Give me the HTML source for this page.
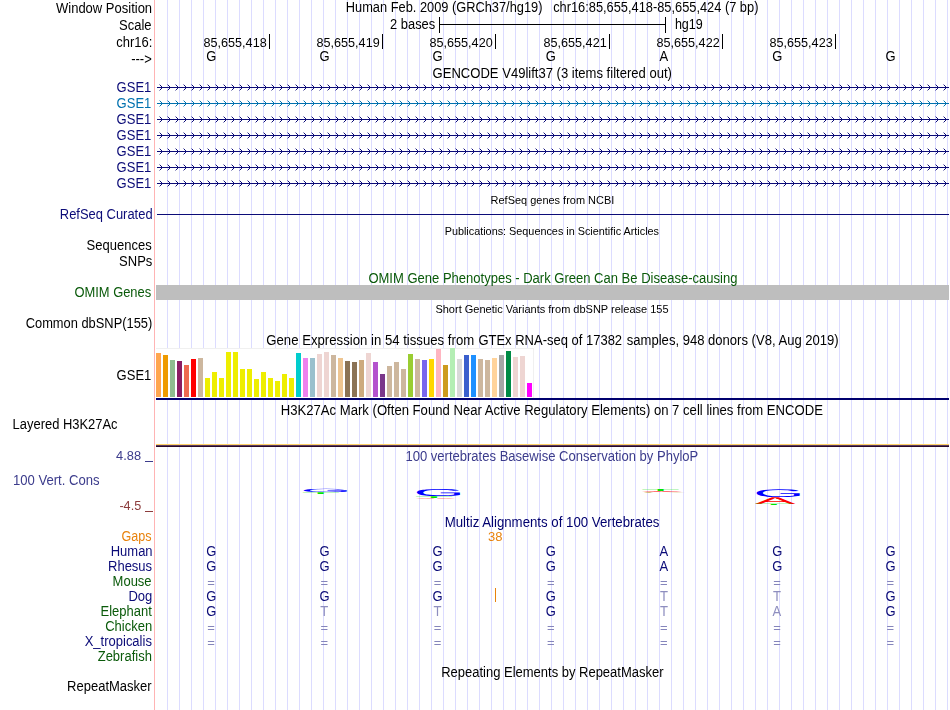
<!DOCTYPE html>
<html><head><meta charset="utf-8"><title>UCSC Genome Browser</title>
<style>
html,body{margin:0;padding:0;background:#fff;}
body{width:950px;height:710px;overflow:hidden;position:relative;font-family:"Liberation Sans", sans-serif;font-size:13px;color:#000;}
.t{position:absolute;white-space:pre;line-height:16px;height:16px;}
.b{position:absolute;}
#tx{will-change:opacity;}
text{white-space:pre;}
.ch{position:absolute;left:157px;width:792px;height:7px;background:linear-gradient(var(--c),var(--c)) 0 3px/100% 1px no-repeat,linear-gradient(90deg,var(--l) 1px,transparent 1px) 2px 0/8px 1px repeat-x,linear-gradient(90deg,var(--c) 1px,transparent 1px) 3px 1px/8px 1px repeat-x,linear-gradient(90deg,var(--c) 1px,transparent 1px) 4px 2px/8px 1px repeat-x,linear-gradient(90deg,var(--c) 1px,transparent 1px) 4px 4px/8px 1px repeat-x,linear-gradient(90deg,var(--c) 1px,transparent 1px) 3px 5px/8px 1px repeat-x,linear-gradient(90deg,var(--l) 1px,transparent 1px) 2px 6px/8px 1px repeat-x;}
svg{position:absolute;left:0;top:0;}
</style></head><body>
<svg width="950" height="710" viewBox="0 0 950 710" shape-rendering="crispEdges">
<rect x="154" y="0" width="1" height="710" fill="#ffb4b4"/>
<path d="M167 0h1v710h-1zM179 0h1v710h-1zM191 0h1v710h-1zM203 0h1v710h-1zM215 0h1v710h-1zM227 0h1v710h-1zM239 0h1v710h-1zM251 0h1v710h-1zM263 0h1v710h-1zM275 0h1v710h-1zM287 0h1v710h-1zM299 0h1v710h-1zM311 0h1v710h-1zM323 0h1v710h-1zM335 0h1v710h-1zM347 0h1v710h-1zM359 0h1v710h-1zM371 0h1v710h-1zM383 0h1v710h-1zM395 0h1v710h-1zM407 0h1v710h-1zM419 0h1v710h-1zM431 0h1v710h-1zM443 0h1v710h-1zM455 0h1v710h-1zM467 0h1v710h-1zM479 0h1v710h-1zM491 0h1v710h-1zM503 0h1v710h-1zM515 0h1v710h-1zM527 0h1v710h-1zM539 0h1v710h-1zM551 0h1v710h-1zM563 0h1v710h-1zM575 0h1v710h-1zM587 0h1v710h-1zM599 0h1v710h-1zM611 0h1v710h-1zM623 0h1v710h-1zM635 0h1v710h-1zM647 0h1v710h-1zM659 0h1v710h-1zM671 0h1v710h-1zM683 0h1v710h-1zM695 0h1v710h-1zM707 0h1v710h-1zM719 0h1v710h-1zM731 0h1v710h-1zM743 0h1v710h-1zM755 0h1v710h-1zM767 0h1v710h-1zM779 0h1v710h-1zM791 0h1v710h-1zM803 0h1v710h-1zM815 0h1v710h-1zM827 0h1v710h-1zM839 0h1v710h-1zM851 0h1v710h-1zM863 0h1v710h-1zM875 0h1v710h-1zM887 0h1v710h-1zM899 0h1v710h-1zM911 0h1v710h-1zM923 0h1v710h-1zM935 0h1v710h-1zM947 0h1v710h-1z" fill="#dcdcff"/>
</svg>
<div class="b" style="left:439px;top:24px;width:227px;height:1px;background:#000"></div>
<div class="b" style="left:439px;top:17px;width:1px;height:16px;background:#000"></div>
<div class="b" style="left:665px;top:17px;width:1px;height:16px;background:#000"></div>
<div class="b" style="left:269px;top:34px;width:1px;height:15px;background:#000"></div>
<div class="b" style="left:382px;top:34px;width:1px;height:15px;background:#000"></div>
<div class="b" style="left:495px;top:34px;width:1px;height:15px;background:#000"></div>
<div class="b" style="left:609px;top:34px;width:1px;height:15px;background:#000"></div>
<div class="b" style="left:722px;top:34px;width:1px;height:15px;background:#000"></div>
<div class="b" style="left:835px;top:34px;width:1px;height:15px;background:#000"></div>
<div class="ch" style="top:84px;--c:#0c0c78;--l:rgba(12,12,120,0.4)"></div>
<div class="ch" style="top:100px;--c:#0171af;--l:rgba(1,113,175,0.4)"></div>
<div class="ch" style="top:116px;--c:#0c0c78;--l:rgba(12,12,120,0.4)"></div>
<div class="ch" style="top:132px;--c:#0c0c78;--l:rgba(12,12,120,0.4)"></div>
<div class="ch" style="top:148px;--c:#0c0c78;--l:rgba(12,12,120,0.4)"></div>
<div class="ch" style="top:164px;--c:#0c0c78;--l:rgba(12,12,120,0.4)"></div>
<div class="ch" style="top:180px;--c:#0c0c78;--l:rgba(12,12,120,0.4)"></div>
<div class="b" style="left:157px;top:214px;width:792px;height:1px;background:#0c0c78"></div>
<div class="b" style="left:156px;top:285px;width:793px;height:15px;background:#bebebe"></div>
<div class="b" style="left:156px;top:348px;width:378px;height:50px;background:#fff;box-shadow:inset -1px 1px 0 #f0f0f0"></div>
<svg width="950" height="710" viewBox="0 0 950 710" shape-rendering="crispEdges"><rect x="156" y="353" width="5" height="44" fill="#FFA54F"/><rect x="163" y="355" width="5" height="42" fill="#EE9A00"/><rect x="170" y="360" width="5" height="37" fill="#8FBC8F"/><rect x="177" y="361" width="5" height="36" fill="#8B1C62"/><rect x="184" y="365" width="5" height="32" fill="#EE6A50"/><rect x="191" y="359" width="5" height="38" fill="#FF0000"/><rect x="198" y="358" width="5" height="39" fill="#CDB79E"/><rect x="205" y="378" width="5" height="19" fill="#EEEE00"/><rect x="212" y="372" width="5" height="25" fill="#EEEE00"/><rect x="219" y="378" width="5" height="19" fill="#EEEE00"/><rect x="226" y="352" width="5" height="45" fill="#EEEE00"/><rect x="233" y="352" width="5" height="45" fill="#EEEE00"/><rect x="240" y="369" width="5" height="28" fill="#EEEE00"/><rect x="247" y="369" width="5" height="28" fill="#EEEE00"/><rect x="254" y="379" width="5" height="18" fill="#EEEE00"/><rect x="261" y="372" width="5" height="25" fill="#EEEE00"/><rect x="268" y="378" width="5" height="19" fill="#EEEE00"/><rect x="275" y="381" width="5" height="16" fill="#EEEE00"/><rect x="282" y="374" width="5" height="23" fill="#EEEE00"/><rect x="289" y="378" width="5" height="19" fill="#EEEE00"/><rect x="296" y="353" width="5" height="44" fill="#00CDCD"/><rect x="303" y="358" width="5" height="39" fill="#EE82EE"/><rect x="310" y="358" width="5" height="39" fill="#9AC0CD"/><rect x="317" y="354" width="5" height="43" fill="#EED5D2"/><rect x="324" y="352" width="5" height="45" fill="#EED5D2"/><rect x="331" y="355" width="5" height="42" fill="#CDB79E"/><rect x="338" y="358" width="5" height="39" fill="#EEC591"/><rect x="345" y="361" width="5" height="36" fill="#8B7355"/><rect x="352" y="362" width="5" height="35" fill="#8B7355"/><rect x="359" y="360" width="5" height="37" fill="#CDAA7D"/><rect x="366" y="353" width="5" height="44" fill="#EED5D2"/><rect x="373" y="362" width="5" height="35" fill="#B452CD"/><rect x="380" y="374" width="5" height="23" fill="#7A378B"/><rect x="387" y="366" width="5" height="31" fill="#CDB79E"/><rect x="394" y="362" width="5" height="35" fill="#CDB79E"/><rect x="401" y="369" width="5" height="28" fill="#CDB79E"/><rect x="408" y="354" width="5" height="43" fill="#9ACD32"/><rect x="415" y="359" width="5" height="38" fill="#CDB79E"/><rect x="422" y="360" width="5" height="37" fill="#7A67EE"/><rect x="429" y="359" width="5" height="38" fill="#FFD700"/><rect x="436" y="349" width="5" height="48" fill="#FFB6C1"/><rect x="443" y="365" width="5" height="32" fill="#CD9B1D"/><rect x="450" y="348" width="5" height="49" fill="#B4EEB4"/><rect x="457" y="359" width="5" height="38" fill="#D9D9D9"/><rect x="464" y="355" width="5" height="42" fill="#3A5FCD"/><rect x="471" y="355" width="5" height="42" fill="#1E90FF"/><rect x="478" y="359" width="5" height="38" fill="#CDB79E"/><rect x="485" y="360" width="5" height="37" fill="#CDB79E"/><rect x="492" y="358" width="5" height="39" fill="#FFD39B"/><rect x="499" y="355" width="5" height="42" fill="#A6A6A6"/><rect x="506" y="351" width="5" height="46" fill="#008B45"/><rect x="513" y="357" width="5" height="40" fill="#EED5D2"/><rect x="520" y="356" width="5" height="41" fill="#EED5D2"/><rect x="527" y="383" width="5" height="14" fill="#FF00FF"/><rect x="156" y="398" width="793" height="2" fill="#00006e"/></svg>
<div class="b" style="left:156px;top:444px;width:793px;height:1px;background:#ffd166"></div>
<div class="b" style="left:156px;top:445px;width:793px;height:1px;background:#5a3a5e"></div>
<div class="b" style="left:156px;top:446px;width:793px;height:1px;background:#280a28"></div>
<div class="b" style="left:145px;top:461px;width:7.5px;height:1px;background:#3c3c8c"></div>
<div class="b" style="left:145px;top:511px;width:7.5px;height:1px;background:#8c3c3c"></div>
<svg width="950" height="710" viewBox="0 0 950 710" font-family="Liberation Sans, sans-serif" font-size="64" text-rendering="geometricPrecision">
<text transform="translate(300.30 492.10) scale(1.030 0.0739)" fill="#0000ff">G</text>
<text transform="translate(301.20 493.80) scale(1.000 0.0391)" fill="#00e400">T</text>
<text transform="translate(413.55 496.30) scale(1.030 0.1587)" fill="#0000ff">G</text>
<text transform="translate(414.45 498.00) scale(1.000 0.0413)" fill="#00e400">T</text>
<text transform="translate(415.35 498.80) scale(0.950 0.0196)" fill="#ff0000">A</text>
<text transform="translate(640.95 491.10) scale(1.000 0.0478)" fill="#00e400">T</text>
<text transform="translate(641.85 492.10) scale(0.950 0.0239)" fill="#ff0000">A</text>
<text transform="translate(640.05 492.50) scale(1.030 0.0130)" fill="#b09000">C</text>
<text transform="translate(753.30 497.00) scale(1.030 0.1761)" fill="#0000ff">G</text>
<text transform="translate(755.10 504.00) scale(0.950 0.1522)" fill="#ff0000">A</text>
<text transform="translate(754.20 505.20) scale(1.000 0.0261)" fill="#00e400">T</text>
</svg>
<div class="b" style="left:495px;top:588px;width:1px;height:14px;background:#e8820c"></div>
<svg id="tx" width="950" height="710" viewBox="0 0 950 710" font-family="Liberation Sans, sans-serif" font-size="14" fill="#000">
<text x="56.0" y="13" textLength="96.1" lengthAdjust="spacingAndGlyphs">Window Position</text>
<text x="119.1" y="30" textLength="32.5" lengthAdjust="spacingAndGlyphs">Scale</text>
<text x="116.3" y="47" textLength="36.1" lengthAdjust="spacingAndGlyphs">chr16:</text>
<text x="131.2" y="64" textLength="20.6" lengthAdjust="spacingAndGlyphs">---&gt;</text>
<text x="345.8" y="12" textLength="412.6" lengthAdjust="spacingAndGlyphs">Human Feb. 2009 (GRCh37/hg19)   chr16:85,655,418-85,655,424 (7 bp)</text>
<text x="390.1" y="29" textLength="45.1" lengthAdjust="spacingAndGlyphs">2 bases</text>
<text x="674.9" y="29" textLength="27.9" lengthAdjust="spacingAndGlyphs">hg19</text>
<text x="203.5" y="47" font-size="13" textLength="63.2" lengthAdjust="spacingAndGlyphs">85,655,418</text>
<text x="316.5" y="47" font-size="13" textLength="63.2" lengthAdjust="spacingAndGlyphs">85,655,419</text>
<text x="429.5" y="47" font-size="13" textLength="63.2" lengthAdjust="spacingAndGlyphs">85,655,420</text>
<text x="543.5" y="47" font-size="13" textLength="63.2" lengthAdjust="spacingAndGlyphs">85,655,421</text>
<text x="656.5" y="47" font-size="13" textLength="63.2" lengthAdjust="spacingAndGlyphs">85,655,422</text>
<text x="769.5" y="47" font-size="13" textLength="63.2" lengthAdjust="spacingAndGlyphs">85,655,423</text>
<text x="206.2" y="61" textLength="10.1" lengthAdjust="spacingAndGlyphs">G</text>
<text x="319.4" y="61" textLength="10.1" lengthAdjust="spacingAndGlyphs">G</text>
<text x="432.6" y="61" textLength="10.1" lengthAdjust="spacingAndGlyphs">G</text>
<text x="545.8" y="61" textLength="10.1" lengthAdjust="spacingAndGlyphs">G</text>
<text x="659.4" y="61" textLength="8.7" lengthAdjust="spacingAndGlyphs">A</text>
<text x="772.2" y="61" textLength="10.1" lengthAdjust="spacingAndGlyphs">G</text>
<text x="885.4" y="61" textLength="10.1" lengthAdjust="spacingAndGlyphs">G</text>
<text x="432.6" y="78" textLength="239.3" lengthAdjust="spacingAndGlyphs">GENCODE V49lift37 (3 items filtered out)</text>
<text x="116.6" y="92" fill="#0c0c78" textLength="34.7" lengthAdjust="spacingAndGlyphs">GSE1</text>
<text x="116.6" y="108" fill="#0171af" textLength="34.7" lengthAdjust="spacingAndGlyphs">GSE1</text>
<text x="116.6" y="124" fill="#0c0c78" textLength="34.7" lengthAdjust="spacingAndGlyphs">GSE1</text>
<text x="116.6" y="140" fill="#0c0c78" textLength="34.7" lengthAdjust="spacingAndGlyphs">GSE1</text>
<text x="116.6" y="156" fill="#0c0c78" textLength="34.7" lengthAdjust="spacingAndGlyphs">GSE1</text>
<text x="116.6" y="172" fill="#0c0c78" textLength="34.7" lengthAdjust="spacingAndGlyphs">GSE1</text>
<text x="116.6" y="188" fill="#0c0c78" textLength="34.7" lengthAdjust="spacingAndGlyphs">GSE1</text>
<text x="490.6" y="204" font-size="11" textLength="123.7" lengthAdjust="spacingAndGlyphs">RefSeq genes from NCBI</text>
<text x="59.8" y="219" fill="#0c0c78" textLength="92.8" lengthAdjust="spacingAndGlyphs">RefSeq Curated</text>
<text x="444.7" y="235" font-size="11" textLength="214.3" lengthAdjust="spacingAndGlyphs">Publications: Sequences in Scientific Articles</text>
<text x="86.6" y="250" textLength="65.1" lengthAdjust="spacingAndGlyphs">Sequences</text>
<text x="119.1" y="266" textLength="33.2" lengthAdjust="spacingAndGlyphs">SNPs</text>
<text x="368.4" y="283" fill="#0a5a0a" textLength="369.0" lengthAdjust="spacingAndGlyphs">OMIM Gene Phenotypes - Dark Green Can Be Disease-causing</text>
<text x="74.4" y="297" fill="#0a5a0a" textLength="76.8" lengthAdjust="spacingAndGlyphs">OMIM Genes</text>
<text x="435.4" y="313" font-size="11">Short Genetic Variants from dbSNP release 155</text>
<text x="25.7" y="328" textLength="126.6" lengthAdjust="spacingAndGlyphs">Common dbSNP(155)</text>
<text x="266.3" y="345" textLength="207.9" lengthAdjust="spacingAndGlyphs">Gene Expression in 54 tissues from</text>
<text x="478.4" y="345" textLength="143.7" lengthAdjust="spacingAndGlyphs">GTEx RNA-seq of 17382</text>
<text x="626.8" y="345" textLength="211.9" lengthAdjust="spacingAndGlyphs">samples, 948 donors (V8, Aug 2019)</text>
<text x="116.6" y="380" textLength="34.7" lengthAdjust="spacingAndGlyphs">GSE1</text>
<text x="280.7" y="415" textLength="542.3" lengthAdjust="spacingAndGlyphs">H3K27Ac Mark (Often Found Near Active Regulatory Elements) on 7 cell lines from ENCODE</text>
<text x="12.6" y="429" textLength="105.0" lengthAdjust="spacingAndGlyphs">Layered H3K27Ac</text>
<text x="116.1" y="460" font-size="13" fill="#3c3c8c" textLength="25.0" lengthAdjust="spacingAndGlyphs">4.88</text>
<text x="405.4" y="461" fill="#3c3c8c" textLength="292.9" lengthAdjust="spacingAndGlyphs">100 vertebrates Basewise Conservation by PhyloP</text>
<text x="12.9" y="485" fill="#3c3c8c" textLength="86.7" lengthAdjust="spacingAndGlyphs">100 Vert. Cons</text>
<text x="119.4" y="510" font-size="13" fill="#8c3c3c" textLength="21.8" lengthAdjust="spacingAndGlyphs">-4.5</text>
<text x="444.7" y="527" fill="#00006e" textLength="214.8" lengthAdjust="spacingAndGlyphs">Multiz Alignments of 100 Vertebrates</text>
<text x="121.5" y="541" fill="#e8820c" textLength="30.0" lengthAdjust="spacingAndGlyphs">Gaps</text>
<text x="488.0" y="541" font-size="13" fill="#e8820c">38</text>
<text x="110.7" y="556" fill="#0c0c78" textLength="41.9" lengthAdjust="spacingAndGlyphs">Human</text>
<text x="206.2" y="556" fill="#0c0c78" textLength="10.1" lengthAdjust="spacingAndGlyphs">G</text>
<text x="319.4" y="556" fill="#0c0c78" textLength="10.1" lengthAdjust="spacingAndGlyphs">G</text>
<text x="432.6" y="556" fill="#0c0c78" textLength="10.1" lengthAdjust="spacingAndGlyphs">G</text>
<text x="545.8" y="556" fill="#0c0c78" textLength="10.1" lengthAdjust="spacingAndGlyphs">G</text>
<text x="659.4" y="556" fill="#0c0c78" textLength="8.7" lengthAdjust="spacingAndGlyphs">A</text>
<text x="772.2" y="556" fill="#0c0c78" textLength="10.1" lengthAdjust="spacingAndGlyphs">G</text>
<text x="885.4" y="556" fill="#0c0c78" textLength="10.1" lengthAdjust="spacingAndGlyphs">G</text>
<text x="108.0" y="571" fill="#0c0c78" textLength="44.1" lengthAdjust="spacingAndGlyphs">Rhesus</text>
<text x="206.2" y="571" fill="#0c0c78" textLength="10.1" lengthAdjust="spacingAndGlyphs">G</text>
<text x="319.4" y="571" fill="#0c0c78" textLength="10.1" lengthAdjust="spacingAndGlyphs">G</text>
<text x="432.6" y="571" fill="#0c0c78" textLength="10.1" lengthAdjust="spacingAndGlyphs">G</text>
<text x="545.8" y="571" fill="#0c0c78" textLength="10.1" lengthAdjust="spacingAndGlyphs">G</text>
<text x="659.4" y="571" fill="#0c0c78" textLength="8.7" lengthAdjust="spacingAndGlyphs">A</text>
<text x="772.2" y="571" fill="#0c0c78" textLength="10.1" lengthAdjust="spacingAndGlyphs">G</text>
<text x="885.4" y="571" fill="#0c0c78" textLength="10.1" lengthAdjust="spacingAndGlyphs">G</text>
<text x="112.6" y="586" fill="#0a5a0a" textLength="39.0" lengthAdjust="spacingAndGlyphs">Mouse</text>
<text x="207.3" y="587" font-size="13" fill="#8585bb">=</text>
<text x="320.5" y="587" font-size="13" fill="#8585bb">=</text>
<text x="433.7" y="587" font-size="13" fill="#8585bb">=</text>
<text x="546.9" y="587" font-size="13" fill="#8585bb">=</text>
<text x="660.1" y="587" font-size="13" fill="#8585bb">=</text>
<text x="773.3" y="587" font-size="13" fill="#8585bb">=</text>
<text x="886.5" y="587" font-size="13" fill="#8585bb">=</text>
<text x="128.4" y="601" fill="#0c0c78" textLength="23.9" lengthAdjust="spacingAndGlyphs">Dog</text>
<text x="206.2" y="601" fill="#0c0c78" textLength="10.1" lengthAdjust="spacingAndGlyphs">G</text>
<text x="319.4" y="601" fill="#0c0c78" textLength="10.1" lengthAdjust="spacingAndGlyphs">G</text>
<text x="432.6" y="601" fill="#0c0c78" textLength="10.1" lengthAdjust="spacingAndGlyphs">G</text>
<text x="545.8" y="601" fill="#0c0c78" textLength="10.1" lengthAdjust="spacingAndGlyphs">G</text>
<text x="659.9" y="601" fill="#8e8ebf" textLength="8.0" lengthAdjust="spacingAndGlyphs">T</text>
<text x="773.1" y="601" fill="#8e8ebf" textLength="8.0" lengthAdjust="spacingAndGlyphs">T</text>
<text x="885.4" y="601" fill="#0c0c78" textLength="10.1" lengthAdjust="spacingAndGlyphs">G</text>
<text x="100.5" y="616" fill="#0a5a0a" textLength="51.3" lengthAdjust="spacingAndGlyphs">Elephant</text>
<text x="206.2" y="616" fill="#0c0c78" textLength="10.1" lengthAdjust="spacingAndGlyphs">G</text>
<text x="320.3" y="616" fill="#8e8ebf" textLength="8.0" lengthAdjust="spacingAndGlyphs">T</text>
<text x="433.5" y="616" fill="#8e8ebf" textLength="8.0" lengthAdjust="spacingAndGlyphs">T</text>
<text x="545.8" y="616" fill="#0c0c78" textLength="10.1" lengthAdjust="spacingAndGlyphs">G</text>
<text x="659.9" y="616" fill="#8e8ebf" textLength="8.0" lengthAdjust="spacingAndGlyphs">T</text>
<text x="772.6" y="616" fill="#8e8ebf" textLength="8.7" lengthAdjust="spacingAndGlyphs">A</text>
<text x="885.4" y="616" fill="#0c0c78" textLength="10.1" lengthAdjust="spacingAndGlyphs">G</text>
<text x="105.2" y="631" fill="#0a5a0a" textLength="47.0" lengthAdjust="spacingAndGlyphs">Chicken</text>
<text x="207.3" y="632" font-size="13" fill="#8585bb">=</text>
<text x="320.5" y="632" font-size="13" fill="#8585bb">=</text>
<text x="433.7" y="632" font-size="13" fill="#8585bb">=</text>
<text x="546.9" y="632" font-size="13" fill="#8585bb">=</text>
<text x="660.1" y="632" font-size="13" fill="#8585bb">=</text>
<text x="773.3" y="632" font-size="13" fill="#8585bb">=</text>
<text x="886.5" y="632" font-size="13" fill="#8585bb">=</text>
<text x="84.7" y="646" fill="#0c0c78" textLength="67.2" lengthAdjust="spacingAndGlyphs">X_tropicalis</text>
<text x="207.3" y="647" font-size="13" fill="#8585bb">=</text>
<text x="320.5" y="647" font-size="13" fill="#8585bb">=</text>
<text x="433.7" y="647" font-size="13" fill="#8585bb">=</text>
<text x="546.9" y="647" font-size="13" fill="#8585bb">=</text>
<text x="660.1" y="647" font-size="13" fill="#8585bb">=</text>
<text x="773.3" y="647" font-size="13" fill="#8585bb">=</text>
<text x="886.5" y="647" font-size="13" fill="#8585bb">=</text>
<text x="97.7" y="661" fill="#0a5a0a" textLength="54.2" lengthAdjust="spacingAndGlyphs">Zebrafish</text>
<text x="441.2" y="677" textLength="222.3" lengthAdjust="spacingAndGlyphs">Repeating Elements by RepeatMasker</text>
<text x="67.1" y="691" textLength="84.5" lengthAdjust="spacingAndGlyphs">RepeatMasker</text>
</svg>
</body></html>
